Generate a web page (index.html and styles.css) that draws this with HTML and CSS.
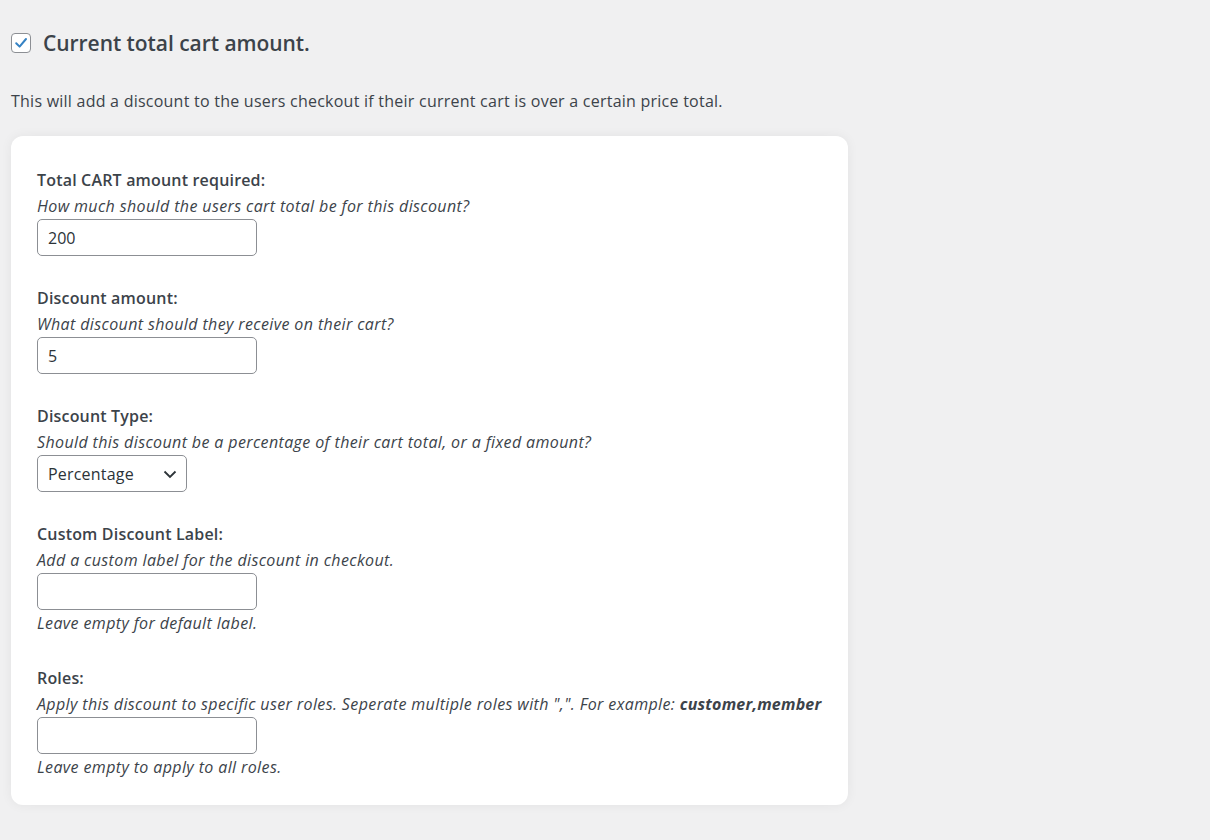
FILE: index.html
```html
<!DOCTYPE html>
<html>
<head>
<meta charset="utf-8">
<link rel="stylesheet" href="styles.css">
</head>
<body>
<div class="page">
  <div class="head">
    <span class="checkbox">
      <svg width="14" height="14" viewBox="0 0 14 14"><path d="M2.2 7.2 L5.6 10.6 L12 3" fill="none" stroke="#3582c4" stroke-width="2" stroke-linecap="round" stroke-linejoin="round"/></svg>
    </span>
    <h2 class="title">Current total cart amount.</h2>
  </div>
  <p class="intro">This will add a discount to the users checkout if their current cart is over a certain price total.</p>
  <div class="card">
    <div class="field">
      <div class="label">Total CART amount required:</div>
      <div class="hint">How much should the users cart total be for this discount?</div>
      <div class="input">200</div>
    </div>
    <div class="field">
      <div class="label">Discount amount:</div>
      <div class="hint">What discount should they receive on their cart?</div>
      <div class="input">5</div>
    </div>
    <div class="field">
      <div class="label">Discount Type:</div>
      <div class="hint">Should this discount be a percentage of their cart total, or a fixed amount?</div>
      <div class="select"><span>Percentage</span>
        <svg width="16" height="16" viewBox="0 0 16 16"><path d="M2.5 5.5 L8 11 L13.5 5.5" fill="none" stroke="#2c3338" stroke-width="1.8"/></svg>
      </div>
    </div>
    <div class="field">
      <div class="label">Custom Discount Label:</div>
      <div class="hint">Add a custom label for the discount in checkout.</div>
      <div class="input"></div>
      <div class="hint">Leave empty for default label.</div>
    </div>
    <div class="field">
      <div class="label">Roles:</div>
      <div class="hint">Apply this discount to specific user roles. Seperate multiple roles with ",". For example: <b>customer,member</b></div>
      <div class="input"></div>
      <div class="hint">Leave empty to apply to all roles.</div>
    </div>
  </div>
</div>
</body>
</html>
```

FILE: styles.css
```css
html, body {
  margin: 0;
  padding: 0;
  background: #f0f0f1;
}
body {
  font-family: "Open Sans", "Noto Sans", sans-serif;
  color: #3c434a;
  font-size: 16px;
  line-height: 26px;
}
.page {
  padding: 30px 11px 35px 11px;
}
.head {
  display: flex;
  align-items: center;
  gap: 12px;
  height: 26px;
}
.checkbox {
  box-sizing: border-box;
  width: 20px;
  height: 20px;
  border: 1px solid #8c8f94;
  border-radius: 4px;
  background: #fff;
  display: flex;
  align-items: center;
  justify-content: center;
}
.title {
  margin: 0;
  font-size: 21px;
  font-weight: 600;
  color: #3c434a;
  line-height: 26px;
  letter-spacing: -0.05px;
}
.intro {
  margin: 32px 0 22px 0;
  font-size: 16px;
  letter-spacing: 0.24px;
}
.card {
  box-sizing: border-box;
  width: 837px;
  background: #fff;
  border-radius: 12px;
  box-shadow: 0 0 12px rgba(0, 0, 0, 0.06);
  padding: 31px 25px 25px 26px;
  display: flex;
  flex-direction: column;
  gap: 29px;
}
.label {
  font-weight: 600;
  letter-spacing: 0.18px;
}
.hint {
  font-style: italic;
  letter-spacing: 0.38px;
  white-space: nowrap;
}
.hint b {
  font-weight: 700;
  letter-spacing: 0.2px;
}
.input, .select {
  box-sizing: border-box;
  height: 37px;
  border: 1px solid #8c8f94;
  border-radius: 5px;
  background: #fff;
  padding: 0 10px;
  display: flex;
  align-items: center;
  color: #2c3338;
}
.input {
  width: 220px;
}
.select {
  width: 150px;
  justify-content: space-between;
  padding-right: 8px;
  letter-spacing: 0.2px;
}
```
